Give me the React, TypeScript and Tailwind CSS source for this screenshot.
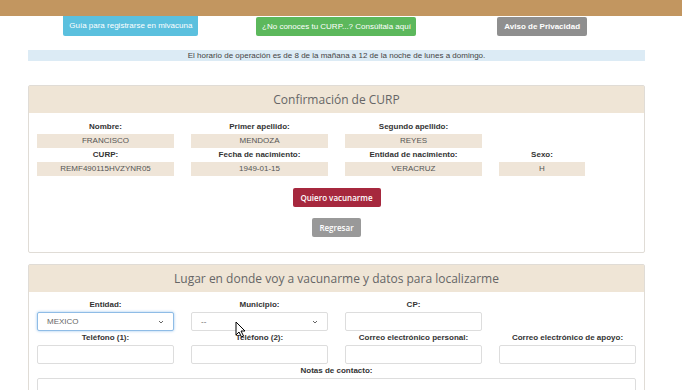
import React from "react";

const sans = "font-['Liberation_Sans',Arial,sans-serif]";
const title = "font-['Open_Sans','Noto_Sans',sans-serif]";

const Field = ({ label, value, w = "w-[137px]" }: { label: string; value: string; w?: string }) => (
  <div className={`flex flex-col items-center ${w}`}>
    <p className="h-[13px] text-[8px] leading-[13px] font-bold text-[#333]">{label}</p>
    <div className="mt-[1px] h-[14px] w-full bg-[#efe5d8] text-center text-[8px] leading-[14px] text-[#555]">{value}</div>
  </div>
);

const Input = ({ label, children, focus }: { label: string; children?: React.ReactNode; focus?: boolean }) => (
  <div className="flex w-[137px] flex-col items-center">
    <p className="h-[13px] text-[8px] leading-[13px] font-bold text-[#333]">{label}</p>
    <div
      className={`mt-[1px] flex h-[19px] w-full items-center justify-between rounded-[2px] border bg-white px-[9px] text-[8px] text-[#666] ${
        focus ? "border-[#8fbce6] shadow-[0_0_3px_#9cc6ee]" : "border-[#ddd]"
      }`}
    >
      {children}
    </div>
  </div>
);

const Chevron = () => (
  <svg width="6" height="4" viewBox="0 0 6 4" className="text-[#666]">
    <path d="M1 1l2 2 2-2" fill="none" stroke="currentColor" strokeWidth="1" />
  </svg>
);

export default function App() {
  return (
    <div className={`relative h-[390px] w-[682px] overflow-hidden bg-white ${sans}`}>
      <div className="h-[16px] bg-[#c29660]" />
      <div className="mx-[28px] w-[617px]">
        <div className="grid grid-cols-3 items-start">
          <div className="flex justify-center">
            <button className="h-[20px] w-[135px] rounded-b-[2px] bg-[#5bc0de] text-[8px] text-white">Guía para registrarse en mivacuna</button>
          </div>
          <div className="flex justify-center pt-[1px]">
            <button className="h-[19px] w-[160px] rounded-[2px] bg-[#5cb85c] text-[8px] text-white">¿No conoces tu CURP...? Consúltala aquí</button>
          </div>
          <div className="flex justify-center pt-[1px]">
            <button className="h-[19px] w-[90px] rounded-[2px] bg-[#8f8f8f] text-[8px] font-bold text-white">Aviso de Privacidad</button>
          </div>
        </div>

        <div className="mt-[14px] h-[11px] bg-[#dcebf5] text-center text-[8px] leading-[11px] text-[#444]">
          El horario de operación es de 8 de la mañana a 12 de la noche de lunes a domingo.
        </div>

        <div className="mt-[24px] h-[168px] rounded-[2px] border border-[#e0dcd6]">
          <div className={`h-[27px] bg-[#efe5d6] text-center text-[12px] leading-[27px] text-[#666] ${title}`}>Confirmación de CURP</div>
          <div className="flex flex-col px-[8px] pt-[7px]">
            <div className="flex gap-[17px]">
              <Field label="Nombre:" value="FRANCISCO" />
              <Field label="Primer apellido:" value="MENDOZA" />
              <Field label="Segundo apellido:" value="REYES" />
            </div>
            <div className="flex gap-[17px]">
              <Field label="CURP:" value="REMF490115HVZYNR05" />
              <Field label="Fecha de nacimiento:" value="1949-01-15" />
              <Field label="Entidad de nacimiento:" value="VERACRUZ" />
              <Field label="Sexo:" value="H" w="w-[86px]" />
            </div>
          </div>
          <div className={`flex flex-col items-center ${title}`}>
            <button className="mt-[12px] h-[19px] w-[88px] rounded-[2px] bg-[#a6283e] text-[8px] font-semibold text-white">Quiero vacunarme</button>
            <button className="mt-[11px] h-[19px] w-[49px] rounded-[2px] bg-[#999] text-[8px] font-semibold text-white">Regresar</button>
          </div>
        </div>

        <div className="mt-[11px] rounded-[2px] border border-[#e0dcd6] pb-[20px]">
          <div className={`h-[27px] bg-[#efe5d6] text-center text-[12px] leading-[27px] text-[#666] ${title}`}>
            Lugar en donde voy a vacunarme y datos para localizarme
          </div>
          <div className="flex flex-col px-[8px] pt-[6px]">
            <div className="flex gap-[17px]">
              <Input label="Entidad:" focus>
                <span>MEXICO</span>
                <Chevron />
              </Input>
              <Input label="Municipio:">
                <span>--</span>
                <Chevron />
              </Input>
              <Input label="CP:" />
            </div>
            <div className="flex gap-[17px]">
              <Input label="Teléfono (1):" />
              <Input label="Teléfono (2):" />
              <Input label="Correo electrónico personal:" />
              <Input label="Correo electrónico de apoyo:" />
            </div>
            <p className="mt-[1px] h-[12px] text-center text-[8px] leading-[12px] font-bold text-[#333]">Notas de contacto:</p>
            <div className="mt-[1px] h-[30px] w-full rounded-[2px] border border-[#ddd]" />
          </div>
        </div>
      </div>

      <svg width="11" height="17" viewBox="0 0 11 17" className="absolute left-[235px] top-[321px]">
        <path d="M1 1v13l3-3 2.5 5 2-1-2.5-5H10z" fill="#fff" stroke="#000" strokeWidth="1" strokeLinejoin="round" />
      </svg>
    </div>
  );
}
